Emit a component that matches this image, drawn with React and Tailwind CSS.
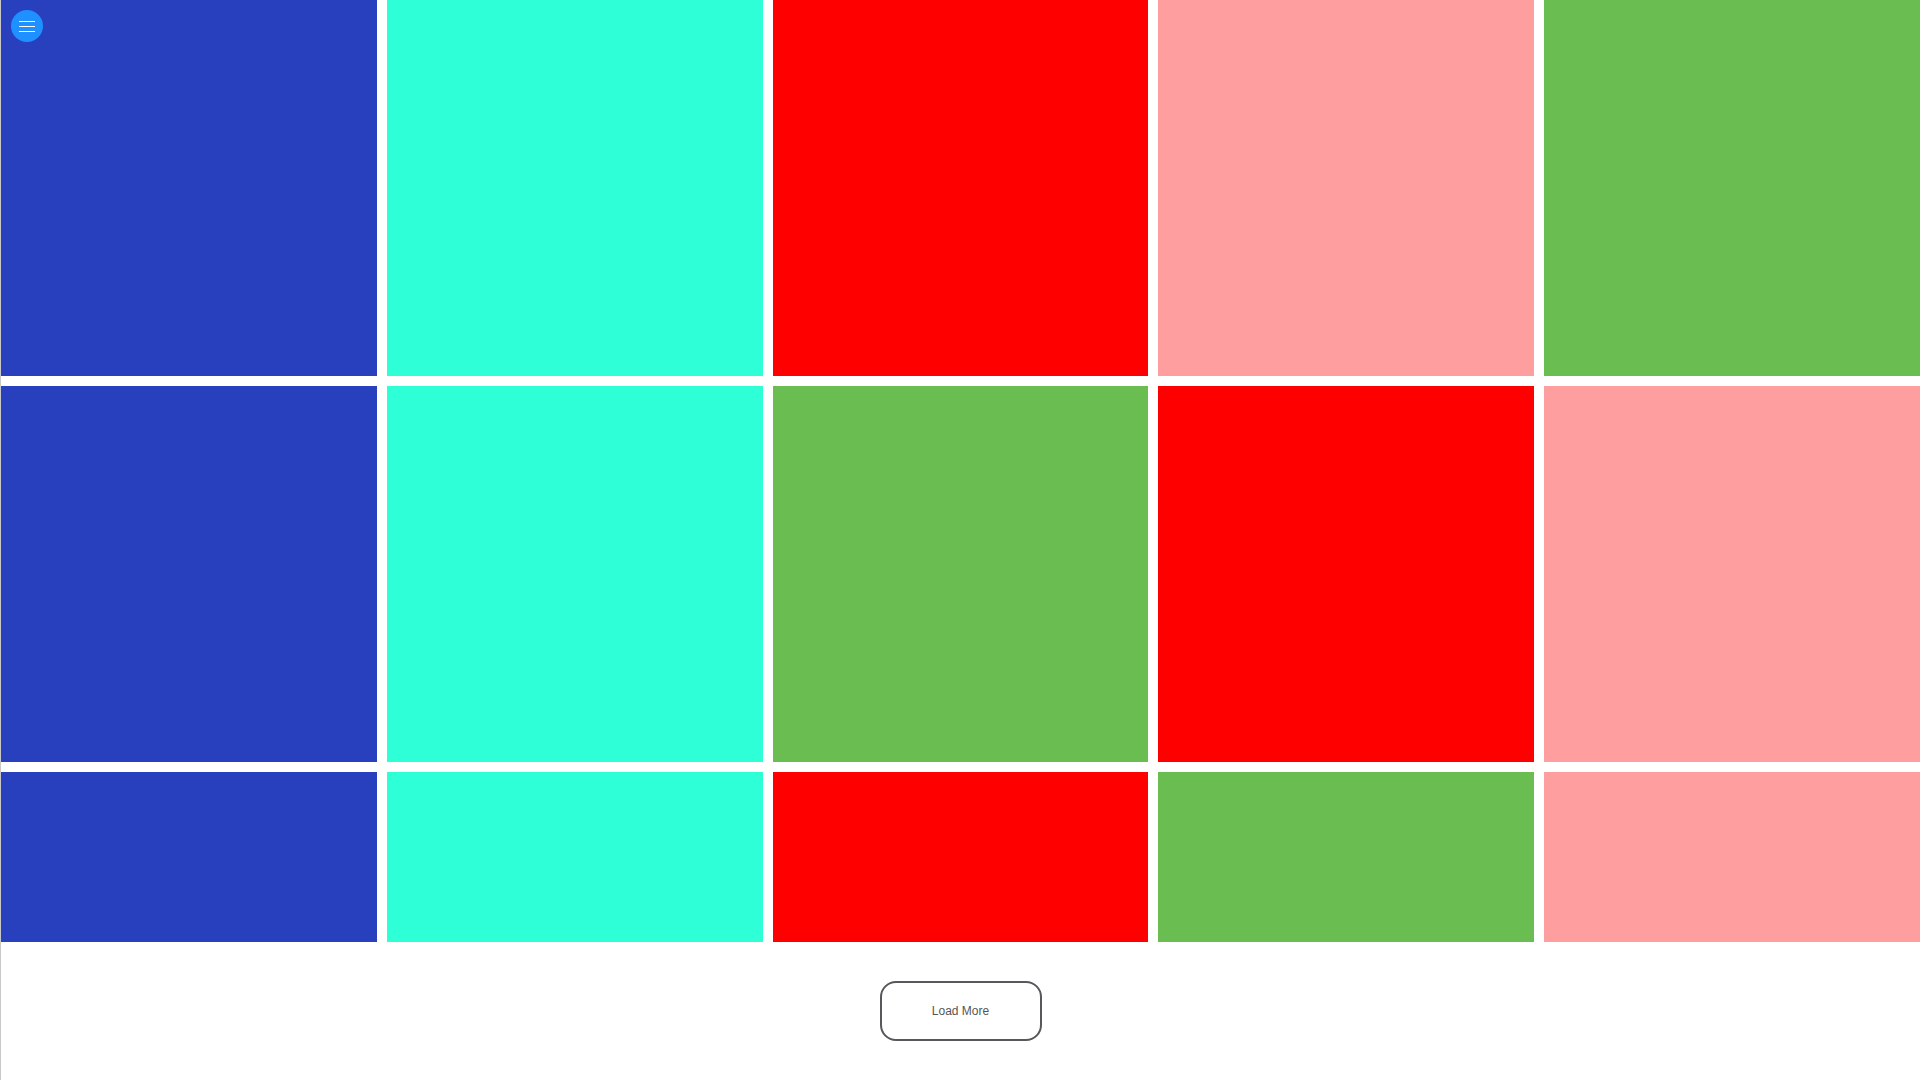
const rows = [
  ['bg-[#2940be]', 'bg-[#2effd6]', 'bg-[#ff0000]', 'bg-[#ff9e9f]', 'bg-[#69bd51]'],
  ['bg-[#2940be]', 'bg-[#2effd6]', 'bg-[#69bd51]', 'bg-[#ff0000]', 'bg-[#ff9e9f]'],
  ['bg-[#2940be]', 'bg-[#2effd6]', 'bg-[#ff0000]', 'bg-[#69bd51]', 'bg-[#ff9e9f]'],
];

export default function App() {
  const tiles = rows.flat();
  return (
    <div className="relative h-[1080px] w-full overflow-hidden border-l border-[#c8c8c8] bg-white font-['Liberation_Sans',Arial,sans-serif]">
      <button className="absolute left-[10px] top-[10px] z-10 flex h-8 w-8 flex-col items-center justify-center gap-[4px] rounded-full bg-[#1e90ff]">
        <span className="block h-px w-4 bg-white" />
        <span className="block h-px w-4 bg-white" />
        <span className="block h-px w-4 bg-white" />
      </button>
      <div className="h-[942px] overflow-hidden">
        <div className="grid grid-cols-5 gap-[10px]">
          {tiles.map((c, i) => (
            <div key={i} className={`aspect-square ${c}`} />
          ))}
        </div>
      </div>
      <div className="flex justify-center pt-[39px]">
        <button className="h-[60px] w-[162px] rounded-[16px] border-2 border-[#58585c] text-[12px] text-[#555]">
          Load More
        </button>
      </div>
    </div>
  );
}
